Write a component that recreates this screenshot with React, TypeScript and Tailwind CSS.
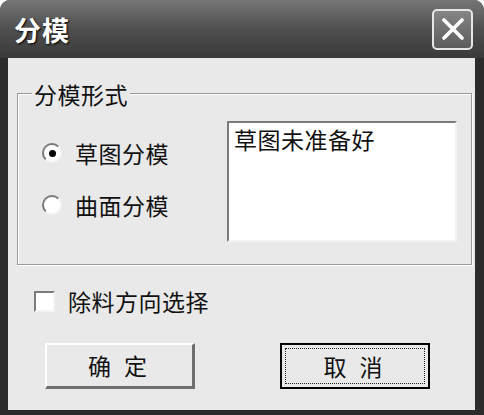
const font = { fontFamily: '"Noto Sans CJK SC", "Noto Sans", sans-serif' };

function Radio({ checked, label }: { checked?: boolean; label: string }) {
  return (
    <div className="flex items-center h-[24px]">
      <span className="w-[20px] h-[20px] rounded-full bg-white border-2 border-[#7a7a7a] border-r-[#f4f4f4] border-b-[#f4f4f4] flex items-center justify-center">
        {checked && <span className="w-[7px] h-[7px] rounded-full bg-black" />}
      </span>
      <span className="ml-[13px] text-[23px] leading-[24px] tracking-[0.5px] text-[#111]">{label}</span>
    </div>
  );
}

export default function App() {
  return (
    <div className="w-[484px] h-[415px] bg-white" style={font}>
      <div className="h-full flex flex-col rounded-t-[10px] bg-[#2c2c2c] pl-[8px] pr-[9px] pb-[5px] overflow-hidden">
        {/* Title bar */}
        <div className="h-[58px] -ml-[8px] -mr-[9px] flex items-center justify-between pl-[14px] pr-[11px] bg-gradient-to-b from-[#767676] via-[#4f4f4f] to-[#3a3a3a]">
          <span className="text-white font-bold text-[27px] leading-none tracking-[1px] [text-shadow:1px_1px_2px_#000]">
            分模
          </span>
          <button className="w-[41px] h-[41px] rounded-[5px] border-2 border-[#e6e6e6] bg-gradient-to-b from-[#858585] to-[#5c5c5c] flex items-center justify-center">
            <svg width="22" height="22" viewBox="0 0 22 22">
              <path d="M2 2 L20 20 M20 2 L2 20" stroke="#fff" strokeWidth="3.6" strokeLinecap="round" />
            </svg>
          </button>
        </div>

        {/* Client area */}
        <div className="flex-1 bg-[#e9e9e9] flex flex-col">
          {/* Group box */}
          <div className="relative mt-[35px] ml-[9px] mr-[3px] h-[172px] border border-[#9a9a9a] shadow-[inset_1px_1px_0_#fff,1px_1px_0_#fff] flex justify-between">
            <span className="absolute left-[14px] -top-[12px] px-[2px] bg-[#e9e9e9] text-[23px] leading-[24px] tracking-[0.5px] text-[#111]">
              分模形式
            </span>
            <div className="pl-[24px] pt-[47px] flex flex-col gap-[28px]">
              <Radio checked label="草图分模" />
              <Radio label="曲面分模" />
            </div>
            <div className="mt-[27px] mr-[14px] w-[230px] h-[121px] bg-white border-2 border-[#7c7c7c] border-r-[#f2f2f2] border-b-[#f2f2f2] px-[5px] pt-[4px] text-[23px] leading-[24px] tracking-[0.5px] text-[#111]">
              草图未准备好
            </div>
          </div>

          {/* Checkbox */}
          <div className="mt-[24px] ml-[26px] flex items-center h-[24px]">
            <span className="w-[21px] h-[21px] bg-white border-2 border-[#7a7a7a] border-r-[#f4f4f4] border-b-[#f4f4f4]" />
            <span className="ml-[13px] text-[23px] leading-[24px] tracking-[0.5px] text-[#111]">除料方向选择</span>
          </div>

          {/* Buttons */}
          <div className="mt-[30px] ml-[37px] flex gap-[85px]">
            <button className="w-[150px] h-[46px] bg-[#e9e9e9] border-t-2 border-l-2 border-b-[3px] border-r-[3px] border-t-white border-l-white border-b-[#6e6e6e] border-r-[#6e6e6e] flex items-center justify-center text-[23px] tracking-[4px] text-[#111]">
              确 定
            </button>
            <button className="w-[150px] h-[46px] bg-[#e9e9e9] border-2 border-black p-[3px] flex">
              <span className="flex-1 border border-dotted border-[#222] flex items-center justify-center text-[23px] tracking-[4px] text-[#111]">
                取 消
              </span>
            </button>
          </div>
        </div>
      </div>
    </div>
  );
}
